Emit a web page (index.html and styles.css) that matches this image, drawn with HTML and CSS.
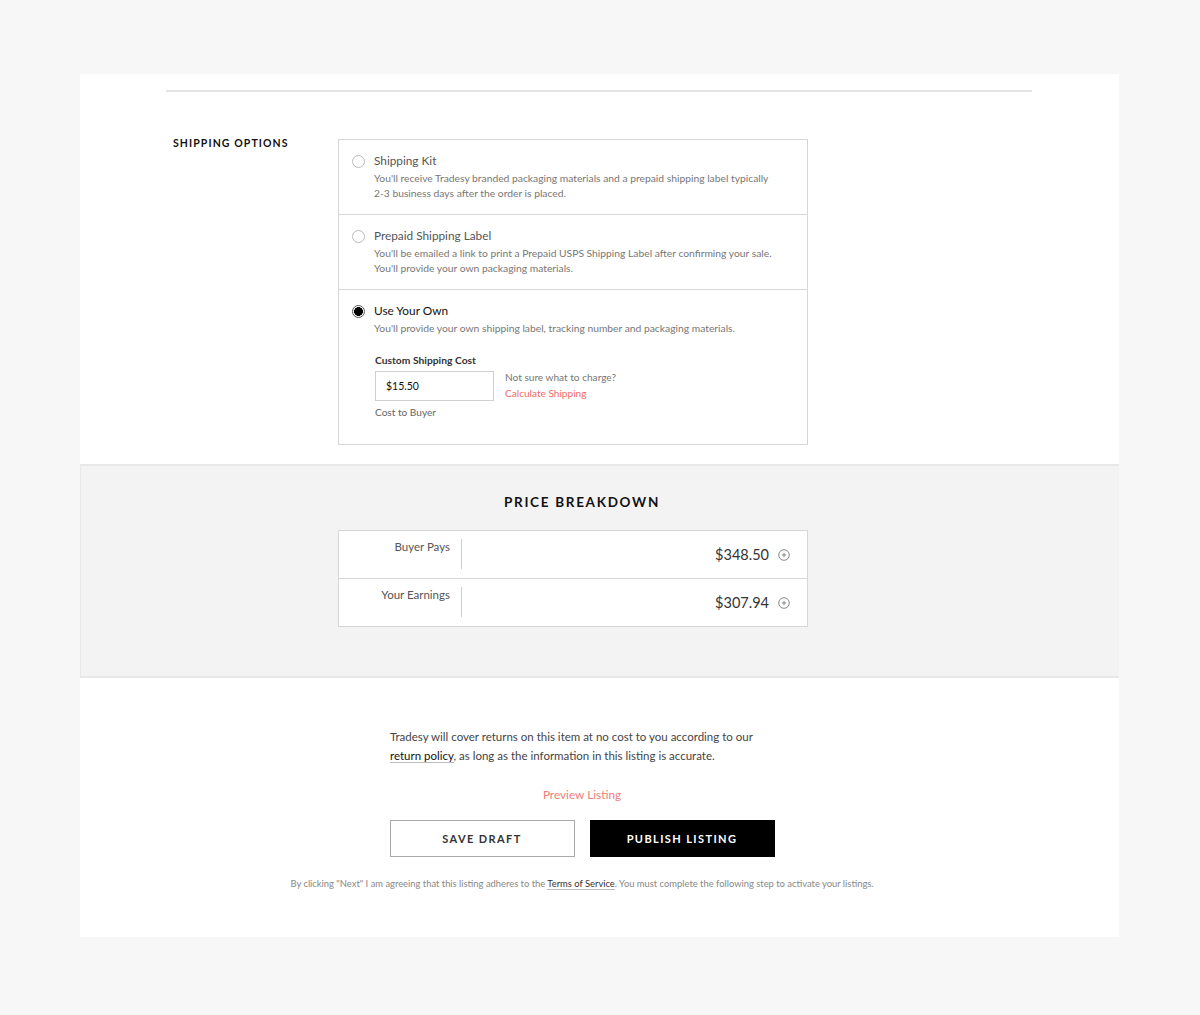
FILE: index.html
```html
<!DOCTYPE html>
<html>
<head>
<meta charset="utf-8">
<link rel="stylesheet" href="styles.css">
</head>
<body>
<div class="card">
  <div class="top">
    <hr class="divider">
    <div class="shipping">
      <div class="label">SHIPPING OPTIONS</div>
      <div class="options">
        <div class="opt">
          <span class="radio"></span>
          <div class="opt-body">
            <div class="opt-title">Shipping Kit</div>
            <div class="opt-desc">You'll receive Tradesy branded packaging materials and a prepaid shipping label typically<br>2-3 business days after the order is placed.</div>
          </div>
        </div>
        <div class="opt">
          <span class="radio"></span>
          <div class="opt-body">
            <div class="opt-title">Prepaid Shipping Label</div>
            <div class="opt-desc">You'll be emailed a link to print a Prepaid USPS Shipping Label after confirming your sale.<br>You'll provide your own packaging materials.</div>
          </div>
        </div>
        <div class="opt opt-last">
          <span class="radio checked"></span>
          <div class="opt-body">
            <div class="opt-title dark">Use Your Own</div>
            <div class="opt-desc">You'll provide your own shipping label, tracking number and packaging materials.</div>
            <div class="custom">
              <div class="custom-label">Custom Shipping Cost</div>
              <div class="custom-row">
                <div class="input">$15.50</div>
                <div class="hint">
                  <div>Not sure what to charge?</div>
                  <div class="calc">Calculate Shipping</div>
                </div>
              </div>
              <div class="cost">Cost to Buyer</div>
            </div>
          </div>
        </div>
      </div>
    </div>
  </div>
  <div class="breakdown">
    <div class="col">
      <h2 class="bd-title">PRICE BREAKDOWN</h2>
      <div class="bd-box">
        <div class="bd-row">
          <div class="bd-label">Buyer Pays</div>
          <div class="bd-sep"></div>
          <div class="bd-value">$348.50</div>
          <svg class="plus" width="12" height="12" viewBox="0 0 12 12"><circle cx="6" cy="6" r="5.3" fill="none" stroke="#888" stroke-width="1"/><path d="M6 3.8v4.4M3.8 6h4.4" stroke="#888" stroke-width="1"/></svg>
        </div>
        <div class="bd-row">
          <div class="bd-label">Your Earnings</div>
          <div class="bd-sep"></div>
          <div class="bd-value">$307.94</div>
          <svg class="plus" width="12" height="12" viewBox="0 0 12 12"><circle cx="6" cy="6" r="5.3" fill="none" stroke="#888" stroke-width="1"/><path d="M6 3.8v4.4M3.8 6h4.4" stroke="#888" stroke-width="1"/></svg>
        </div>
      </div>
    </div>
  </div>
  <div class="footer">
    <p class="returns">Tradesy will cover returns on this item at no cost to you according to our <a class="ul">return policy</a>, as long as the information in this listing is accurate.</p>
    <div class="preview">Preview Listing</div>
    <div class="buttons">
      <button class="btn btn-outline">SAVE DRAFT</button>
      <button class="btn btn-solid">PUBLISH LISTING</button>
    </div>
    <p class="terms">By clicking "Next" I am agreeing that this listing adheres to the <a class="ul">Terms of Service</a>. You must complete the following step to activate your listings.</p>
  </div>
</div>
</body>
</html>
```

FILE: styles.css
```css
* { box-sizing: border-box; }
html, body { margin: 0; padding: 0; }
body {
  background: #f7f7f7;
  font-family: Lato, "Open Sans", Arial, sans-serif;
  color: #333;
  padding: 74px 81px 78px 80px;
}
.card {
  background: #fff;
  width: 1039px;
}
.top {
  padding: 16px 0 19px;
}
.divider {
  margin: 0 87px 0 86px;
  border: 0;
  height: 2px;
  background: #e3e3e3;
}
.shipping {
  display: flex;
  margin-top: 47px;
  padding-left: 93px;
}
.label {
  width: 165px;
  font-size: 10.5px;
  font-weight: 700;
  letter-spacing: 1.1px;
  color: #111;
  margin-top: -2px;
}
.options {
  width: 470px;
  border: 1px solid #d6d6d6;
}
.opt {
  display: flex;
  height: 75px;
  padding: 14px 12px 0 13px;
  border-bottom: 1px solid #d6d6d6;
}
.opt-last {
  border-bottom: 0;
  height: 154px;
}
.radio {
  flex: none;
  width: 13px;
  height: 13px;
  border: 1px solid #bbb;
  border-radius: 50%;
  margin-top: 1px;
  margin-right: 9px;
}
.radio.checked {
  border: 1px solid #555;
  background: radial-gradient(circle, #000 0 4.2px, #fff 4.6px);
}
.opt-title {
  font-size: 11.8px;
  color: #555;
  line-height: 14px;
}
.opt-title.dark { color: #111; }
.opt-desc {
  font-size: 10.3px;
  color: #777;
  line-height: 14.5px;
  margin-top: 3px;
}
.custom {
  margin-top: 18px;
  padding-left: 1px;
}
.custom-label {
  font-size: 10.3px;
  font-weight: 700;
  color: #333;
  line-height: 12px;
}
.custom-row {
  display: flex;
  margin-top: 5px;
}
.input {
  width: 119px;
  height: 30px;
  border: 1px solid #d0d0d0;
  font-size: 10.5px;
  color: #111;
  padding: 8px 0 0 10px;
}
.hint {
  margin-left: 11px;
  font-size: 10.1px;
  color: #777;
  line-height: 16px;
  margin-top: -2px;
}
.calc { color: #f16a6a; }
.cost {
  font-size: 10.1px;
  color: #666;
  margin-top: 5px;
}
.breakdown {
  background: #f3f3f3;
  border-top: 2px solid #e8e8e8;
  border-bottom: 2px solid #e8e8e8;
  border-left: 1px solid #e8e8e8;
  height: 214px;
  padding-left: 257px;
}
.col {
  width: 488px;
}
.bd-title {
  margin: 0;
  padding-top: 28px;
  text-align: center;
  font-size: 13.5px;
  font-weight: 700;
  letter-spacing: 1.7px;
  color: #111;
  line-height: 16px;
}
.bd-box {
  margin-top: 20px;
  width: 470px;
  background: #fff;
  border: 1px solid #d6d6d6;
}
.bd-row {
  display: flex;
  align-items: flex-start;
  height: 48px;
  padding-top: 8px;
  border-bottom: 1px solid #d6d6d6;
}
.bd-row:last-child { border-bottom: 0; height: 47px; }
.bd-label {
  width: 111px;
  text-align: right;
  font-size: 11.5px;
  color: #555;
  line-height: 16px;
}
.bd-sep {
  width: 1px;
  height: 30px;
  background: #ccc;
  margin-left: 11px;
}
.bd-value {
  flex: 1;
  text-align: right;
  font-size: 14.5px;
  color: #333;
  margin-top: 8px;
  line-height: 16px;
}
.plus {
  margin: 10px 17px 0 9px;
}
.footer {
  padding: 49px 35px 47px 0;
  display: flex;
  flex-direction: column;
  align-items: center;
}
.returns {
  width: 384px;
  margin: 0;
  font-size: 11.5px;
  line-height: 19px;
  color: #444;
}
.ul {
  color: #111;
  border-bottom: 1px solid #bbb;
  text-decoration: none;
}
.preview {
  margin-top: 22px;
  font-size: 11.8px;
  color: #f0807a;
  line-height: 16px;
}
.buttons {
  display: flex;
  gap: 15px;
  margin-top: 17px;
}
.btn {
  width: 185px;
  height: 37px;
  font-family: inherit;
  font-size: 11px;
  font-weight: 700;
  letter-spacing: 1.4px;
  cursor: pointer;
}
.btn-outline {
  background: #fff;
  border: 1px solid #aaa;
  color: #333;
}
.btn-solid {
  background: #000;
  border: 1px solid #000;
  color: #fff;
}
.terms {
  margin: 21px 0 0;
  font-size: 9.4px;
  color: #888;
  line-height: 12px;
}
.terms .ul { color: #333; }
```
